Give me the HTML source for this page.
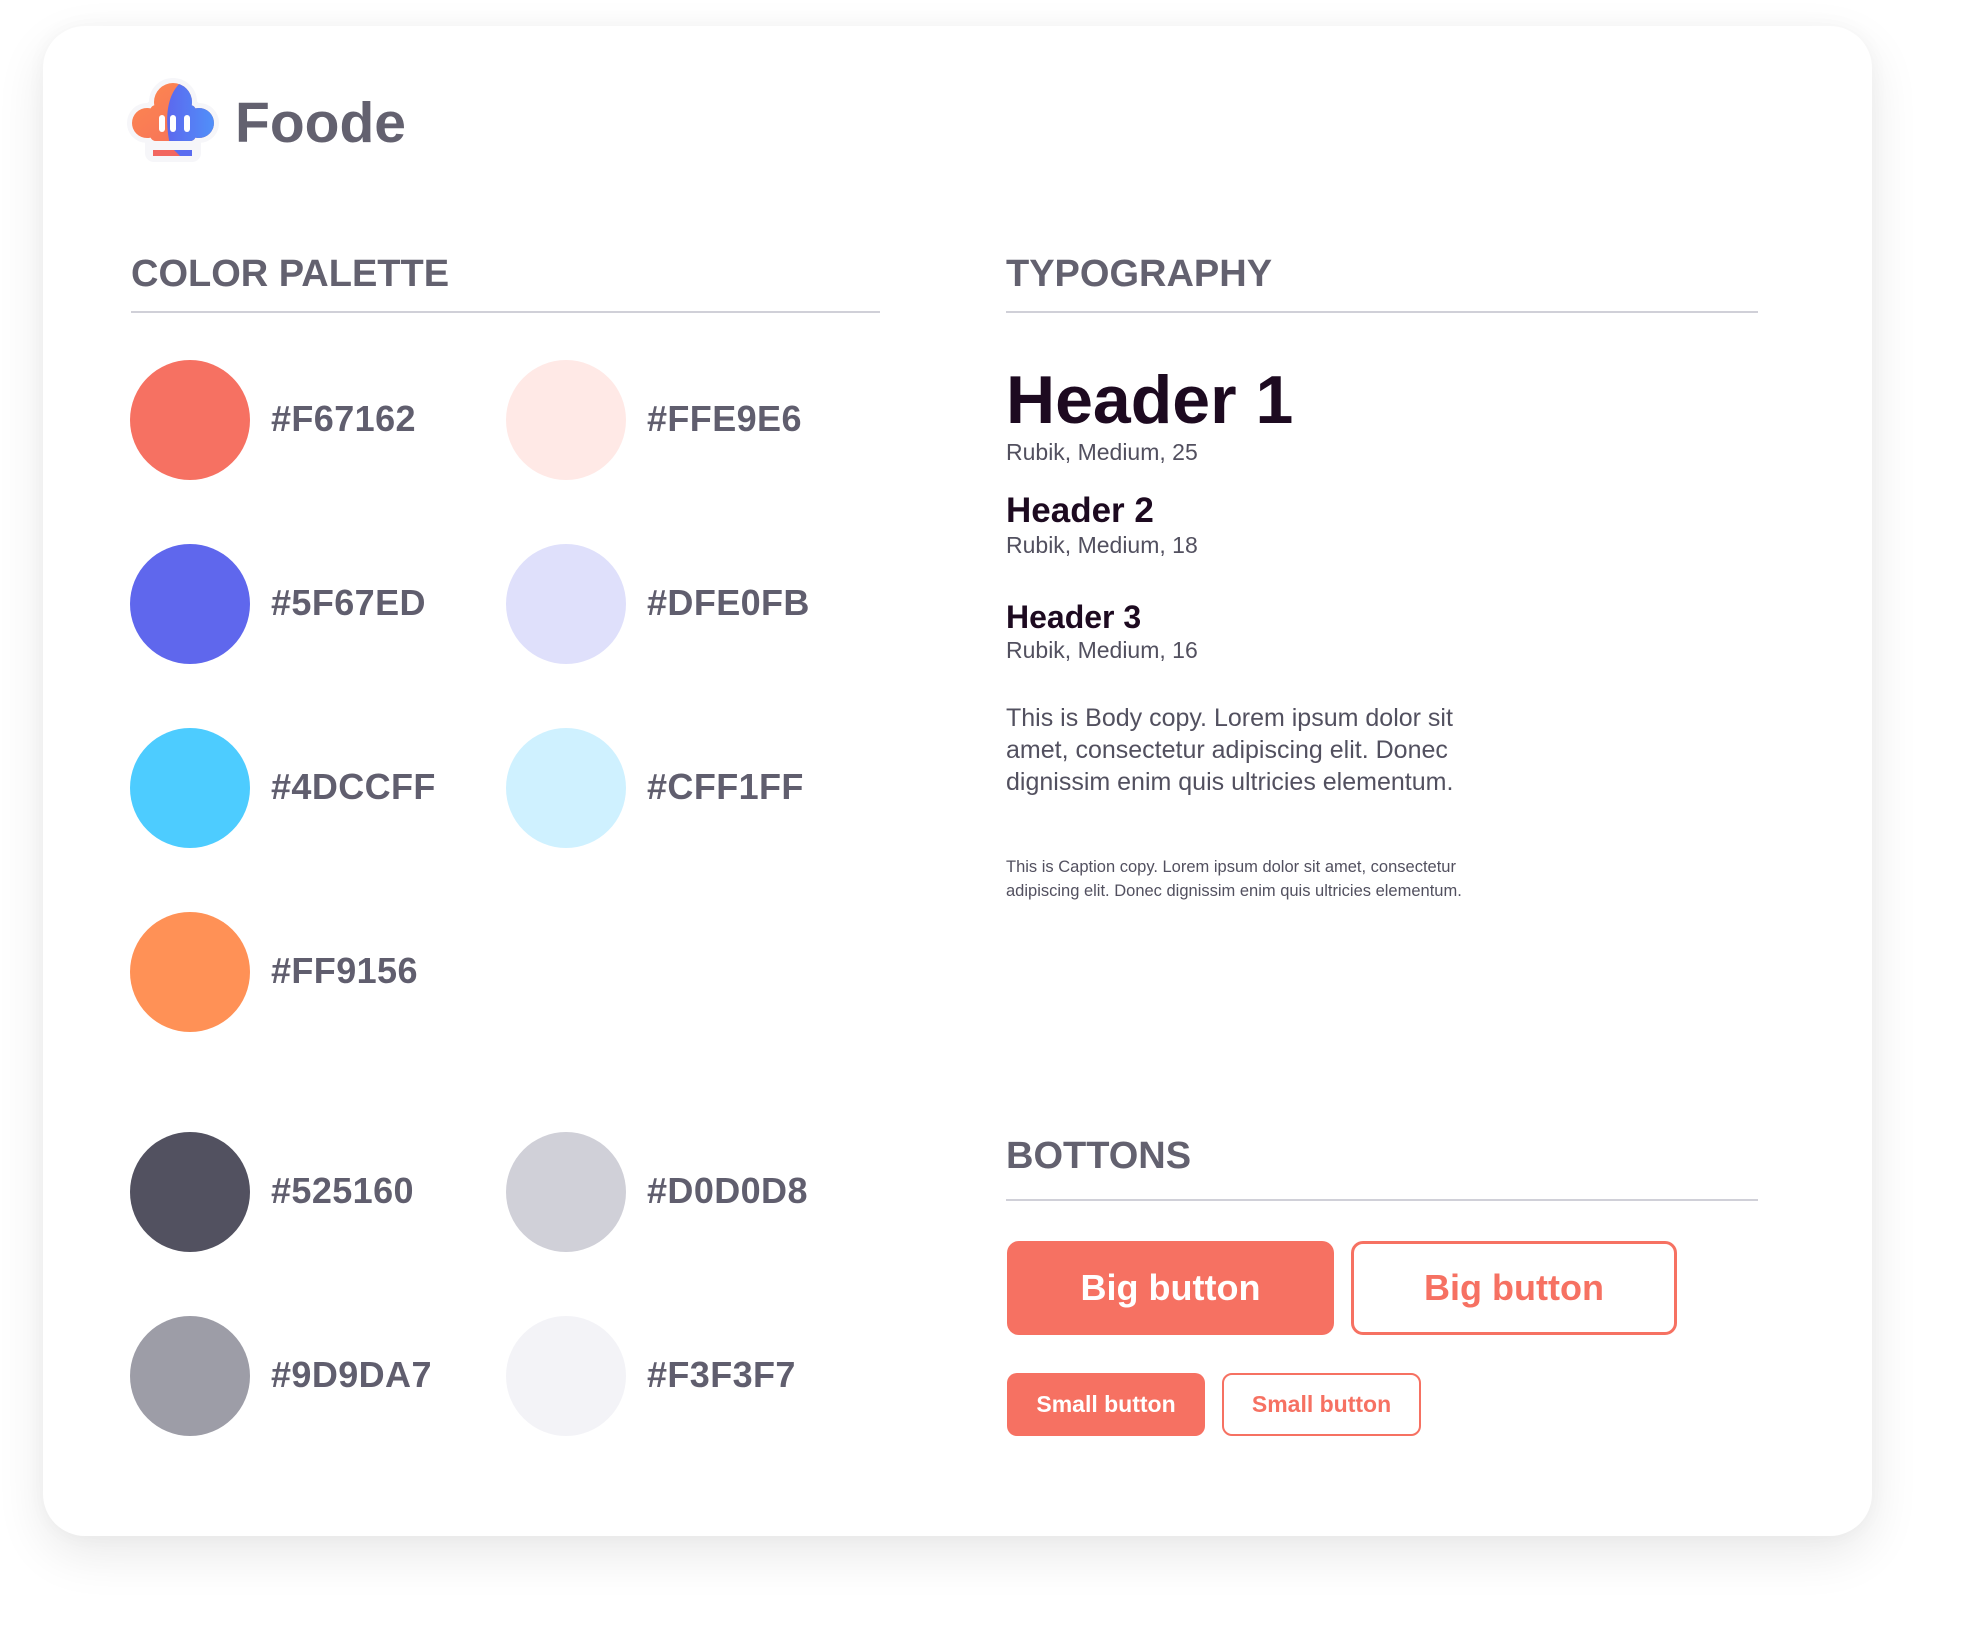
<!DOCTYPE html>
<html><head><meta charset="utf-8"><style>
html,body{margin:0;padding:0;background:#fff;width:1972px;height:1648px;overflow:hidden;font-family:"Liberation Sans",sans-serif;}
.card{position:absolute;left:43px;top:26px;width:1829px;height:1510px;background:#fff;border-radius:42px;box-shadow:0 18px 50px rgba(0,0,0,0.09),0 0 20px rgba(0,0,0,0.03);}
.a{position:absolute;white-space:nowrap;}
.h{font-weight:bold;font-size:38px;line-height:38px;color:#63616f;}
.rule{position:absolute;height:2px;background:#d0d0d8;}
.c{position:absolute;width:120px;height:120px;border-radius:50%;}
.l{position:absolute;font-weight:bold;font-size:36px;line-height:36px;color:#605e6e;letter-spacing:0.4px;}
.dk{color:#1d0a20;font-weight:bold;}
.sub{font-size:23px;line-height:23px;color:#52505f;}
.btn{position:absolute;box-sizing:border-box;border-radius:12px;font-weight:bold;display:flex;align-items:center;justify-content:center;}
</style></head><body>
<div class="card"></div>

<svg style="position:absolute;left:0;top:0" width="260" height="180" viewBox="0 0 260 180">
<defs>
<linearGradient id="og" x1="0" y1="0" x2="1" y2="1"><stop offset="0" stop-color="#ff8d4d"/><stop offset="1" stop-color="#f2665f"/></linearGradient>
<linearGradient id="bg" x1="0" y1="0" x2="1" y2="0"><stop offset="0" stop-color="#5c68ee"/><stop offset="1" stop-color="#4aa6ff"/></linearGradient>
<clipPath id="cl"><circle cx="147" cy="123" r="15"/><circle cx="199" cy="123" r="15"/><circle cx="173" cy="102" r="19"/><rect x="150" y="105" width="46" height="36" rx="6"/></clipPath>
</defs>
<g stroke="#f6f6f9" stroke-width="10" fill="#f6f6f9"><circle cx="147" cy="123" r="15"/><circle cx="199" cy="123" r="15"/><circle cx="173" cy="102" r="19"/><rect x="150" y="105" width="46" height="52" rx="4"/></g>
<g clip-path="url(#cl)"><rect x="120" y="70" width="120" height="90" fill="url(#og)"/><path d="M184 80 C166 92 162 122 174 160 L240 160 L240 70 Z" fill="url(#bg)"/></g>
<rect x="153" y="150" width="39" height="6" fill="#f2665f"/><path d="M174 150 L192 150 L192 156 L180 156 Z" fill="#5a6cf0"/>
<rect x="159" y="115" width="6" height="17" rx="3" fill="#fff"/><rect x="170" y="115" width="6" height="17" rx="3" fill="#fff"/><rect x="184" y="115" width="6" height="17" rx="3" fill="#fff"/>
</svg>
<div class="a" style="left:235px;top:95px;font-size:57px;line-height:57px;font-weight:bold;color:#63616f;">Foode</div>

<div class="a h" style="left:131px;top:255px;">COLOR PALETTE</div>
<div class="rule" style="left:131px;top:311px;width:749px;"></div>
<div class="a h" style="left:1006px;top:255px;">TYPOGRAPHY</div>
<div class="rule" style="left:1006px;top:311px;width:752px;"></div>

<div class="c" style="left:130px;top:360px;background:#f67162"></div><div class="l" style="left:271px;top:401px">#F67162</div>
<div class="c" style="left:506px;top:360px;background:#ffe9e6"></div><div class="l" style="left:647px;top:401px">#FFE9E6</div>
<div class="c" style="left:130px;top:544px;background:#5f67ed"></div><div class="l" style="left:271px;top:585px">#5F67ED</div>
<div class="c" style="left:506px;top:544px;background:#dfe0fb"></div><div class="l" style="left:647px;top:585px">#DFE0FB</div>
<div class="c" style="left:130px;top:728px;background:#4dccff"></div><div class="l" style="left:271px;top:769px">#4DCCFF</div>
<div class="c" style="left:506px;top:728px;background:#cff1ff"></div><div class="l" style="left:647px;top:769px">#CFF1FF</div>
<div class="c" style="left:130px;top:912px;background:#ff9156"></div><div class="l" style="left:271px;top:953px">#FF9156</div>
<div class="c" style="left:130px;top:1132px;background:#525160"></div><div class="l" style="left:271px;top:1173px">#525160</div>
<div class="c" style="left:506px;top:1132px;background:#d0d0d8"></div><div class="l" style="left:647px;top:1173px">#D0D0D8</div>
<div class="c" style="left:130px;top:1316px;background:#9d9da7"></div><div class="l" style="left:271px;top:1357px">#9D9DA7</div>
<div class="c" style="left:506px;top:1316px;background:#f3f3f7"></div><div class="l" style="left:647px;top:1357px">#F3F3F7</div>

<div class="a dk" style="left:1006px;top:366px;font-size:68px;line-height:68px;">Header 1</div>
<div class="a sub" style="left:1006px;top:441px;">Rubik, Medium, 25</div>
<div class="a dk" style="left:1006px;top:493px;font-size:35px;line-height:35px;">Header 2</div>
<div class="a sub" style="left:1006px;top:534px;">Rubik, Medium, 18</div>
<div class="a dk" style="left:1006px;top:601px;font-size:32px;line-height:32px;">Header 3</div>
<div class="a sub" style="left:1006px;top:639px;">Rubik, Medium, 16</div>
<div class="a" style="left:1006px;top:702px;font-size:25px;line-height:32px;color:#52505f;">This is Body copy. Lorem ipsum dolor sit<br>amet, consectetur adipiscing elit. Donec<br>dignissim enim quis ultricies elementum.</div>
<div class="a" style="left:1006px;top:855px;font-size:16.5px;line-height:24px;color:#52505f;">This is Caption copy. Lorem ipsum dolor sit amet, consectetur<br>adipiscing elit. Donec dignissim enim quis ultricies elementum.</div>

<div class="a h" style="left:1006px;top:1137px;">BOTTONS</div>
<div class="rule" style="left:1006px;top:1199px;width:752px;"></div>

<div class="btn" style="left:1007px;top:1241px;width:327px;height:94px;background:#f67162;color:#fff;font-size:36px;">Big button</div>
<div class="btn" style="left:1351px;top:1241px;width:326px;height:94px;border:3px solid #f67162;color:#f67162;font-size:36px;">Big button</div>
<div class="btn" style="left:1007px;top:1373px;width:198px;height:63px;background:#f67162;color:#fff;font-size:23px;border-radius:10px;">Small button</div>
<div class="btn" style="left:1222px;top:1373px;width:199px;height:63px;border:2px solid #f67162;color:#f67162;font-size:23px;border-radius:10px;">Small button</div>
</body></html>
